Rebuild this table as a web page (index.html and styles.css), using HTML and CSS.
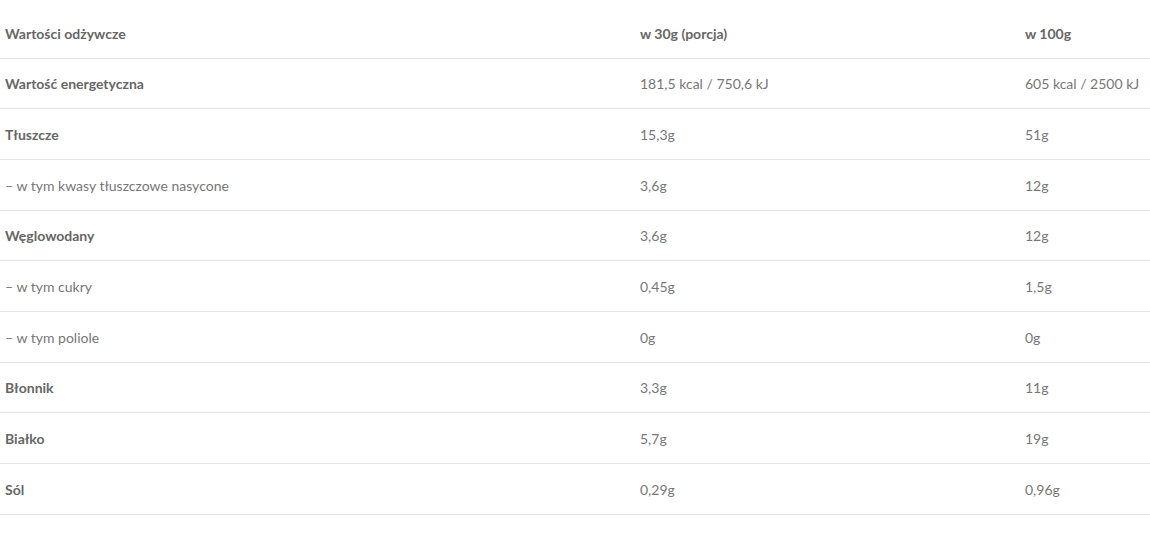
FILE: index.html
```html
<!DOCTYPE html>
<html lang="pl">
<head>
<meta charset="utf-8">
<link rel="stylesheet" href="styles.css">
</head>
<body>
<div class="table">
  <div class="row"><div class="cell b">Wartości odżywcze</div><div class="cell b">w 30g (porcja)</div><div class="cell b">w 100g</div></div>
  <div class="row"><div class="cell b">Wartość energetyczna</div><div class="cell">181,5 kcal / 750,6 kJ</div><div class="cell">605 kcal / 2500 kJ</div></div>
  <div class="row"><div class="cell b">Tłuszcze</div><div class="cell">15,3g</div><div class="cell">51g</div></div>
  <div class="row"><div class="cell">– w tym kwasy tłuszczowe nasycone</div><div class="cell">3,6g</div><div class="cell">12g</div></div>
  <div class="row"><div class="cell b">Węglowodany</div><div class="cell">3,6g</div><div class="cell">12g</div></div>
  <div class="row"><div class="cell">– w tym cukry</div><div class="cell">0,45g</div><div class="cell">1,5g</div></div>
  <div class="row"><div class="cell">– w tym poliole</div><div class="cell">0g</div><div class="cell">0g</div></div>
  <div class="row"><div class="cell b">Błonnik</div><div class="cell">3,3g</div><div class="cell">11g</div></div>
  <div class="row"><div class="cell b">Białko</div><div class="cell">5,7g</div><div class="cell">19g</div></div>
  <div class="row"><div class="cell b">Sól</div><div class="cell">0,29g</div><div class="cell">0,96g</div></div>
</div>
</body>
</html>
```
FILE: styles.css
```css
html, body {
  margin: 0;
  padding: 0;
  background: #fff;
}
body {
  padding-top: 8px;
  font-family: Lato, "Liberation Sans", sans-serif;
  font-size: 14px;
  color: #777;
}
.table {
  width: 1150px;
}
.row {
  display: grid;
  grid-template-columns: 635px 385px 1fr;
  height: 50.67px;
  box-sizing: border-box;
  border-bottom: 1px solid #e3e3e3;
  align-items: center;
}
.cell {
  padding-left: 5px;
  padding-top: 1px;
  line-height: 17px;
}
.b {
  font-weight: 700;
  color: #666;
}
```
